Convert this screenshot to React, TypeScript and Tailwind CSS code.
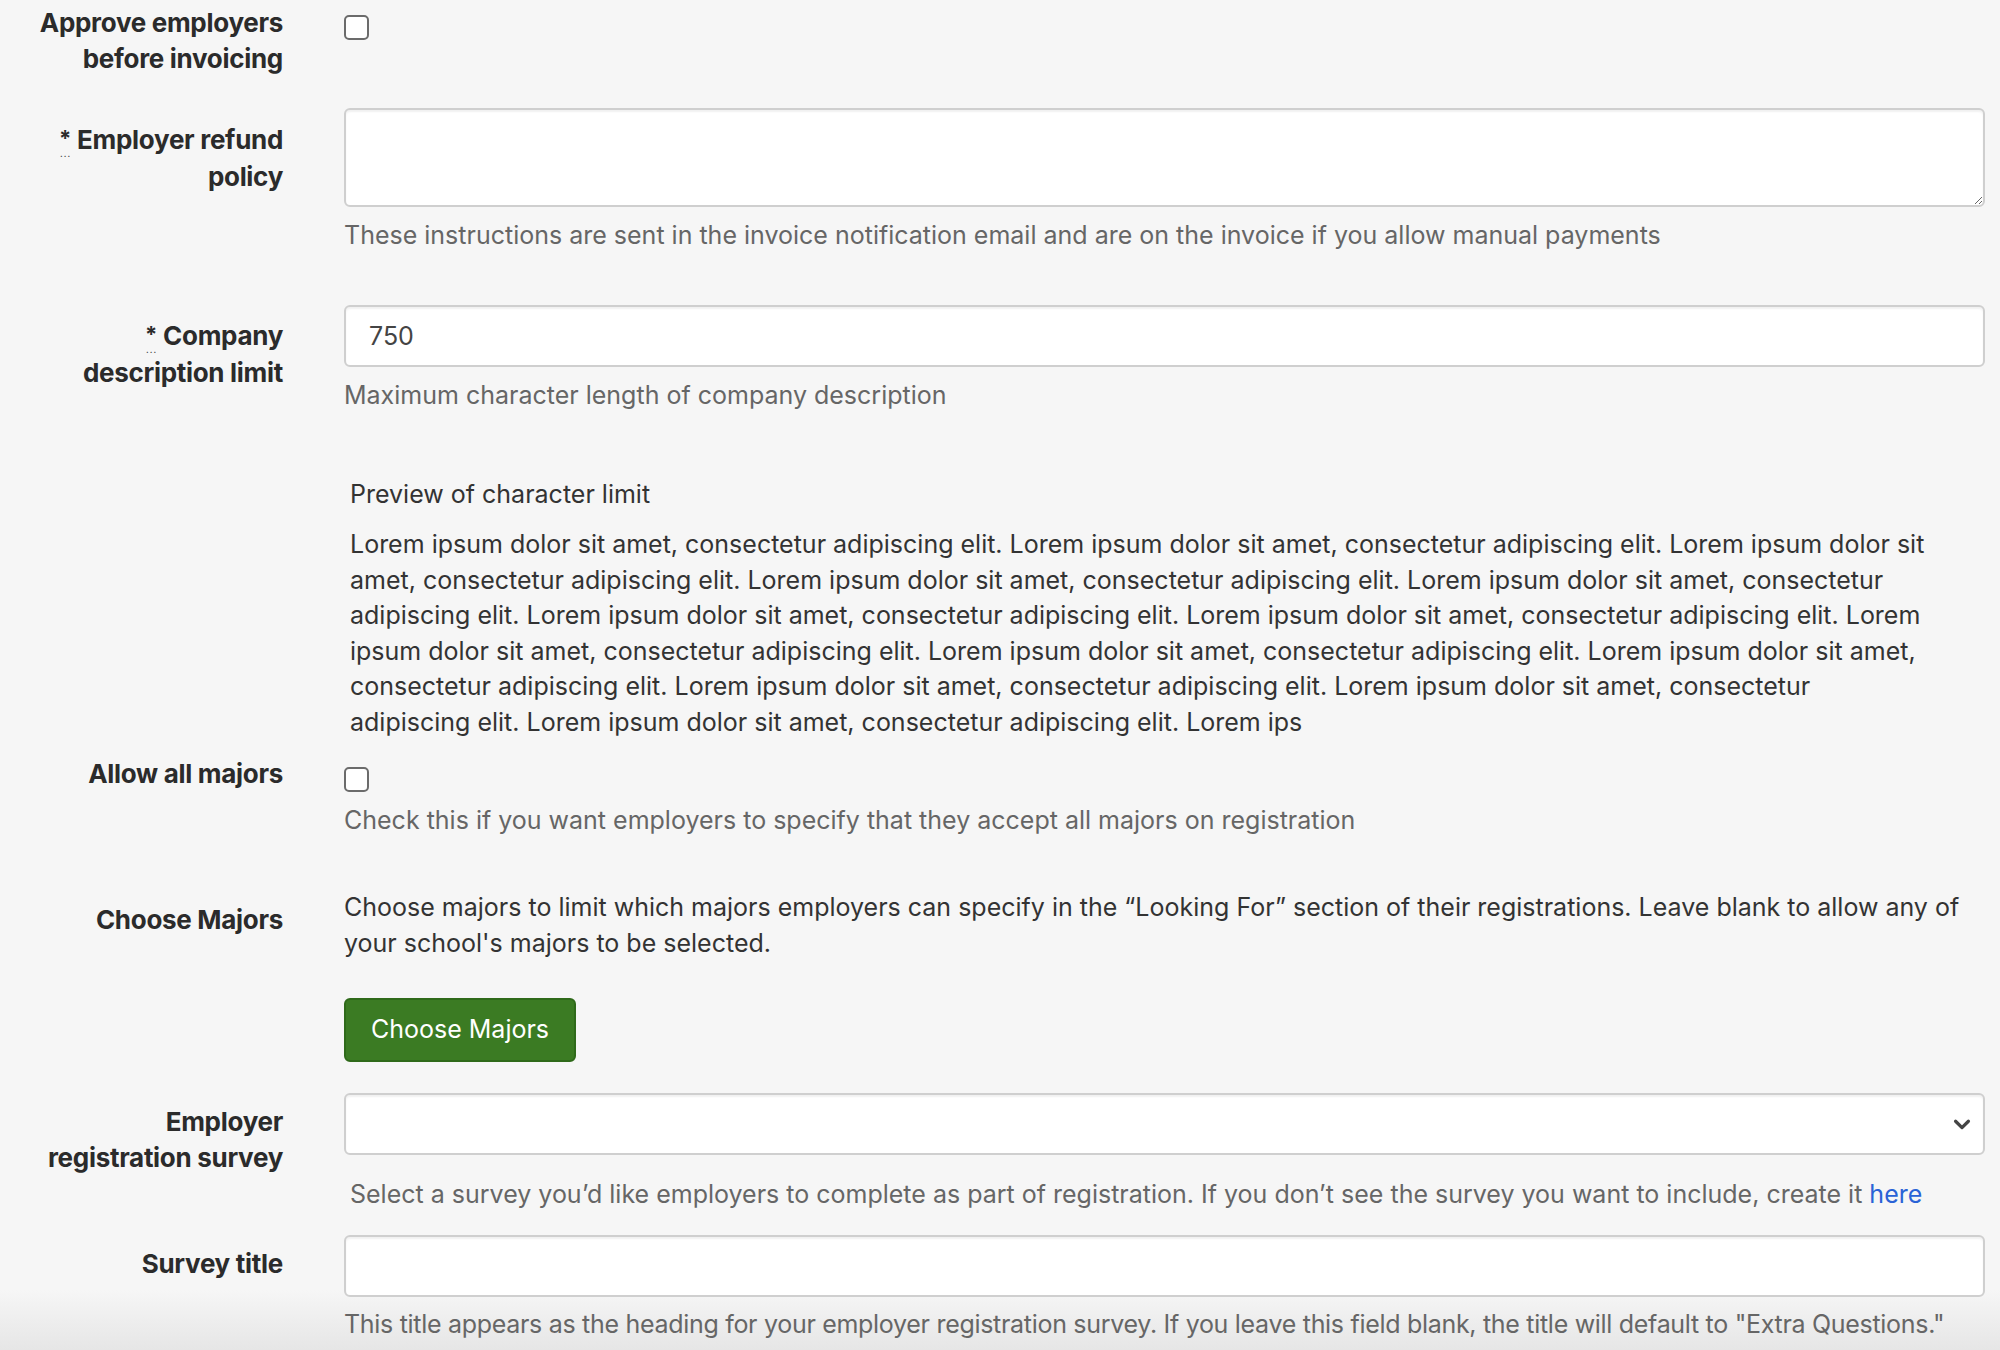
import React from "react";

const SENTENCE = "Lorem ipsum dolor sit amet, consectetur adipiscing elit.";
const LOREM = Array(13).fill(SENTENCE).join(" ") + " Lorem ips";

const Required = () => (
  <abbr title="required" className="no-underline mr-[6px] relative">
    <span className="relative -top-[3px] text-[22px]">*</span>
    <span className="absolute left-[1px] top-[26px] text-[8px] leading-none tracking-[1px]">...</span>
  </abbr>
);

const Label = ({ children, pt }: { children: React.ReactNode; pt: string }) => (
  <div className={`w-[283px] shrink-0 text-right font-bold text-[26px] leading-[36px] tracking-[-0.3px] text-[#2b2b2b] ${pt}`}>
    {children}
  </div>
);

const Help = ({ children, className = "" }: { children: React.ReactNode; className?: string }) => (
  <p className={`text-[25px] leading-[36px] text-[#666] ${className}`}>{children}</p>
);

const Checkbox = ({ className = "" }: { className?: string }) => (
  <div className={`w-[25px] h-[25px] rounded-[5px] border-2 border-[#6b6b6b] bg-white ${className}`} />
);

const inputCls =
  "w-full h-[62px] rounded-[6px] border-2 border-[#cfcfcf] bg-white shadow-[inset_0_2px_2px_rgba(0,0,0,0.06)] px-[23px] text-[25px] text-[#444] outline-none";

export default function App() {
  return (
    <div
      className="relative min-h-[1350px] bg-[#f6f6f6] text-[#333] pr-[15px] overflow-hidden"
      style={{ fontFamily: "Inter, 'Noto Sans', sans-serif" }}
    >
      {/* bottom fade behind content */}
      <div className="pointer-events-none absolute left-0 right-0 top-[1290px] h-[60px] bg-gradient-to-b from-transparent to-[#e6e6e6]" />

      <div className="relative flex flex-col">
        {/* approve employers */}
        <div className="flex gap-[61px]">
          <Label pt="pt-[5px]">
            Approve employers
            <br />
            before invoicing
          </Label>
          <div className="flex-1">
            <Checkbox className="mt-[15px]" />
          </div>
        </div>

        {/* refund policy */}
        <div className="flex gap-[61px] mt-[31px]">
          <Label pt="pt-[14px]">
            <Required />
            Employer refund
            <br />
            policy
          </Label>
          <div className="flex-1">
            <textarea className="block w-full h-[99px] rounded-[6px] border-2 border-[#cfcfcf] bg-white shadow-[inset_0_2px_2px_rgba(0,0,0,0.06)] px-[23px] py-[14px] text-[25px] outline-none" />
            <Help className="mt-[10px]">
              These instructions are sent in the invoice notification email and are on the invoice if you allow manual payments
            </Help>
          </div>
        </div>

        {/* description limit */}
        <div className="flex gap-[61px] mt-[52px]">
          <Label pt="pt-[13px]">
            <Required />
            Company
            <br />
            description limit
          </Label>
          <div className="flex-1">
            <input className={inputCls} defaultValue="750" />
            <Help className="mt-[10px]">Maximum character length of company description</Help>
          </div>
        </div>

        {/* preview */}
        <div className="flex gap-[61px] mt-[63px]">
          <div className="w-[283px] shrink-0" />
          <div className="flex-1 pl-[6px] pr-[55px] text-[25px] text-[#333]">
            <p className="leading-[36px]">Preview of character limit</p>
            <p className="leading-[35.6px] mt-[15px]">{LOREM}</p>
          </div>
        </div>

        {/* allow all majors */}
        <div className="flex gap-[61px] mt-[15px]">
          <Label pt="pt-0">Allow all majors</Label>
          <div className="flex-1">
            <Checkbox className="mt-[11px]" />
            <Help className="mt-[10px]">
              Check this if you want employers to specify that they accept all majors on registration
            </Help>
          </div>
        </div>

        {/* choose majors */}
        <div className="flex gap-[61px] mt-[51px]">
          <Label pt="pt-[13px]">Choose Majors</Label>
          <div className="flex-1">
            <p className="text-[25px] leading-[36px] text-[#333]">
              Choose majors to limit which majors employers can specify in the “Looking For” section of their registrations. Leave blank to allow any of your school's majors to be selected.
            </p>
            <button className="mt-[37px] h-[64px] w-[232px] rounded-[6px] bg-[#3b7b23] border-2 border-[#2f6a1a] text-white text-[25px]">
              Choose Majors
            </button>
          </div>
        </div>

        {/* registration survey */}
        <div className="flex gap-[61px] mt-[31px]">
          <Label pt="pt-[11px]">
            Employer
            <br />
            registration survey
          </Label>
          <div className="flex-1">
            <div className="relative">
              <select className={`${inputCls} appearance-none`} defaultValue="">
                <option value=""></option>
              </select>
              <svg
                className="absolute right-[12px] top-[20px] w-[22px] h-[22px] pointer-events-none"
                viewBox="0 0 24 24"
                fill="none"
                stroke="#444"
                strokeWidth={3.5}
                strokeLinecap="round"
                strokeLinejoin="round"
              >
                <path d="M5 9l7 7 7-7" />
              </svg>
            </div>
            <Help className="mt-[21px] pl-[6px]">
              Select a survey you’d like employers to complete as part of registration. If you don’t see the survey you want to include, create it{" "}
              <a href="#" className="text-[#2a63d6]">
                here
              </a>
            </Help>
          </div>
        </div>

        {/* survey title */}
        <div className="flex gap-[61px] mt-[23px]">
          <Label pt="pt-[11px]">Survey title</Label>
          <div className="flex-1">
            <input className={inputCls} />
            <Help className="mt-[9px] tracking-[-0.3px]">
              This title appears as the heading for your employer registration survey. If you leave this field blank, the title will default to "Extra Questions."
            </Help>
          </div>
        </div>
      </div>
    </div>
  );
}
